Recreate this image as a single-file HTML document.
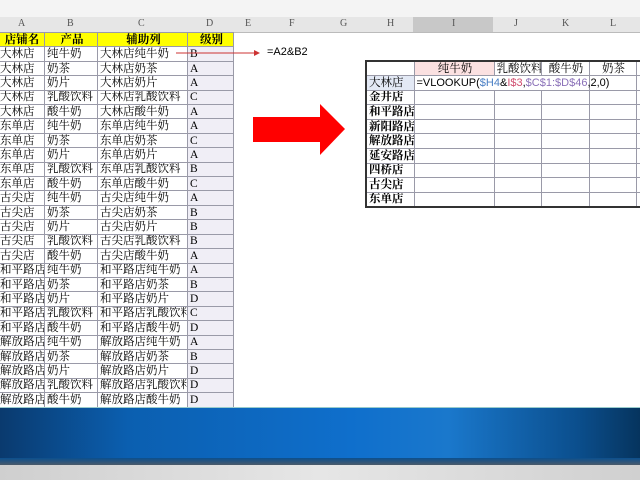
<html><head><style>
body{margin:0;width:640px;height:480px;overflow:hidden;background:#fff;font-family:"Liberation Serif","Noto Serif CJK SC",serif;position:relative}
.a{position:absolute}
table{border-collapse:collapse;position:absolute;table-layout:fixed}
td{border:1px solid #9a9aa8;padding:0 0 0 2px;font-size:11.5px;line-height:12px;white-space:nowrap;overflow:hidden}
#L tr{height:14.42px}
#R tr{height:14.6px}
</style></head><body>
<div class="a" style="left:0;top:0;width:640px;height:17px;background:#f4f4f4"></div>
<div class="a" style="left:0;top:17px;width:640px;height:15px;background:#e6e6e6;border-bottom:1px solid #bbb;font-size:10px;color:#555">
<span class="a" style="left:18px;top:1px">A</span><span class="a" style="left:67px;top:1px">B</span><span class="a" style="left:138px;top:1px">C</span><span class="a" style="left:206px;top:1px">D</span><span class="a" style="left:245px;top:1px">E</span><span class="a" style="left:289px;top:1px">F</span><span class="a" style="left:340px;top:1px">G</span><span class="a" style="left:387px;top:1px">H</span>
<div class="a" style="left:413px;top:0;width:80px;height:15px;background:#c8c8c8"></div>
<span class="a" style="left:452px;top:1px">I</span><span class="a" style="left:514px;top:1px">J</span><span class="a" style="left:562px;top:1px">K</span><span class="a" style="left:610px;top:1px">L</span></div>
<table id="L" style="left:-3px;top:32px;width:236px">
<colgroup><col style="width:47px"><col style="width:53px"><col style="width:90px"><col style="width:46px"></colgroup>
<tr style="background:#ffff00;font-weight:bold;text-align:center"><td>店铺名</td><td>产品</td><td>辅助列</td><td>级别</td></tr>
<tr><td>大林店</td><td>纯牛奶</td><td>大林店纯牛奶</td><td style="background:#f0eef6">B</td></tr>
<tr><td>大林店</td><td>奶茶</td><td>大林店奶茶</td><td style="background:#f0eef6">A</td></tr>
<tr><td>大林店</td><td>奶片</td><td>大林店奶片</td><td style="background:#f0eef6">A</td></tr>
<tr><td>大林店</td><td>乳酸饮料</td><td>大林店乳酸饮料</td><td style="background:#f0eef6">C</td></tr>
<tr><td>大林店</td><td>酸牛奶</td><td>大林店酸牛奶</td><td style="background:#f0eef6">A</td></tr>
<tr><td>东单店</td><td>纯牛奶</td><td>东单店纯牛奶</td><td style="background:#f0eef6">A</td></tr>
<tr><td>东单店</td><td>奶茶</td><td>东单店奶茶</td><td style="background:#f0eef6">C</td></tr>
<tr><td>东单店</td><td>奶片</td><td>东单店奶片</td><td style="background:#f0eef6">A</td></tr>
<tr><td>东单店</td><td>乳酸饮料</td><td>东单店乳酸饮料</td><td style="background:#f0eef6">B</td></tr>
<tr><td>东单店</td><td>酸牛奶</td><td>东单店酸牛奶</td><td style="background:#f0eef6">C</td></tr>
<tr><td>古尖店</td><td>纯牛奶</td><td>古尖店纯牛奶</td><td style="background:#f0eef6">A</td></tr>
<tr><td>古尖店</td><td>奶茶</td><td>古尖店奶茶</td><td style="background:#f0eef6">B</td></tr>
<tr><td>古尖店</td><td>奶片</td><td>古尖店奶片</td><td style="background:#f0eef6">B</td></tr>
<tr><td>古尖店</td><td>乳酸饮料</td><td>古尖店乳酸饮料</td><td style="background:#f0eef6">B</td></tr>
<tr><td>古尖店</td><td>酸牛奶</td><td>古尖店酸牛奶</td><td style="background:#f0eef6">A</td></tr>
<tr><td>和平路店</td><td>纯牛奶</td><td>和平路店纯牛奶</td><td style="background:#f0eef6">A</td></tr>
<tr><td>和平路店</td><td>奶茶</td><td>和平路店奶茶</td><td style="background:#f0eef6">B</td></tr>
<tr><td>和平路店</td><td>奶片</td><td>和平路店奶片</td><td style="background:#f0eef6">D</td></tr>
<tr><td>和平路店</td><td>乳酸饮料</td><td>和平路店乳酸饮料</td><td style="background:#f0eef6">C</td></tr>
<tr><td>和平路店</td><td>酸牛奶</td><td>和平路店酸牛奶</td><td style="background:#f0eef6">D</td></tr>
<tr><td>解放路店</td><td>纯牛奶</td><td>解放路店纯牛奶</td><td style="background:#f0eef6">A</td></tr>
<tr><td>解放路店</td><td>奶茶</td><td>解放路店奶茶</td><td style="background:#f0eef6">B</td></tr>
<tr><td>解放路店</td><td>奶片</td><td>解放路店奶片</td><td style="background:#f0eef6">D</td></tr>
<tr><td>解放路店</td><td>乳酸饮料</td><td>解放路店乳酸饮料</td><td style="background:#f0eef6">D</td></tr>
<tr><td>解放路店</td><td>酸牛奶</td><td>解放路店酸牛奶</td><td style="background:#f0eef6">D</td></tr>
</table>
<svg class="a" style="left:0;top:0" width="640" height="480">
<line x1="176" y1="53" x2="255" y2="53" stroke="#c33" stroke-width="1"/>
<polygon points="260,53 254,50 254,56" fill="#c33"/>
<polygon points="253,117 320,117 320,104 345,129 320,155 320,142 253,142" fill="#f00"/>
</svg>
<div class="a" style="left:267px;top:46px;font-size:11px;font-family:'Liberation Sans',sans-serif">=A2&amp;B2</div>
<table id="R" style="left:365px;top:60px;width:288px;border:2px solid #333;font-weight:bold">
<colgroup><col style="width:48px"><col style="width:80px"><col style="width:47px"><col style="width:48px"><col style="width:47px"><col style="width:18px"></colgroup>
<tr style="text-align:center"><td></td><td style="background:#fbe1e1;font-weight:normal">纯牛奶</td><td style="font-weight:normal">乳酸饮料</td><td style="font-weight:normal">酸牛奶</td><td style="font-weight:normal">奶茶</td><td></td></tr>
<tr><td style="background:#e3e9f5;font-weight:normal">大林店</td><td colspan="3" style="font-family:'Liberation Sans',sans-serif;font-weight:normal;font-size:11px;overflow:visible">=VLOOKUP(<span style="color:#4a7fc4">$H4</span>&amp;<span style="color:#d04d6e">I$3</span>,<span style="color:#8a70b8">$C$1:$D$46</span>,2,0)</td><td></td><td></td></tr>
<tr><td>金井店</td><td></td><td></td><td></td><td></td><td></td></tr>
<tr><td>和平路店</td><td></td><td></td><td></td><td></td><td></td></tr>
<tr><td>新阳路店</td><td></td><td></td><td></td><td></td><td></td></tr>
<tr><td>解放路店</td><td></td><td></td><td></td><td></td><td></td></tr>
<tr><td>延安路店</td><td></td><td></td><td></td><td></td><td></td></tr>
<tr><td>四桥店</td><td></td><td></td><td></td><td></td><td></td></tr>
<tr><td>古尖店</td><td></td><td></td><td></td><td></td><td></td></tr>
<tr><td>东单店</td><td></td><td></td><td></td><td></td><td></td></tr>
</table>
<div class="a" style="left:0;top:407px;width:640px;height:58px;background:linear-gradient(90deg,#0a3a6e 0%,#0b5fb0 20%,#0f6fcc 55%,#1a78cc 70%,#0b4f8e 90%,#06345e 100%);border-top:1px solid #9cc"></div>
<div class="a" style="left:0;top:458px;width:640px;height:7px;background:linear-gradient(#0b4f8e,#4a5a6a)"></div>
<div class="a" style="left:0;top:465px;width:640px;height:15px;background:linear-gradient(90deg,#cfcfcf,#e6e6e6 50%,#d0d0d0)"></div>
</body></html>
